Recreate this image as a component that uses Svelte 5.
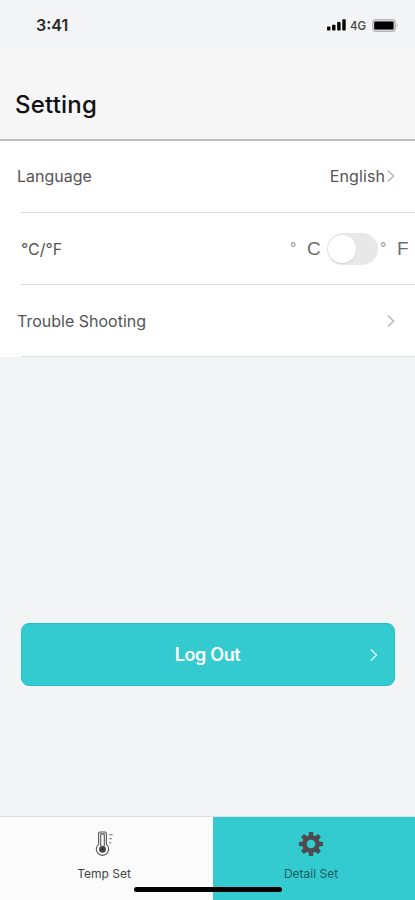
<script lang="ts">
  let fahrenheit = $state(false);
  let activeTab = $state('detail');

  // Teeth of the gear, one every 45 degrees
  const teeth = [0, 45, 90, 135, 180, 225, 270, 315];
</script>

{#snippet chevron()}
  <svg class="chevron" width="8" height="14" viewBox="0 0 8 14">
    <path d="M0.8 1.4 L6.6 7 L0.8 12.6" fill="none" stroke="currentColor" stroke-width="1.4" />
  </svg>
{/snippet}

<div class="screen">
  <div class="status-bar">
    <span class="time">3:41</span>
    <div class="indicators">
      <svg width="19" height="12" viewBox="0 0 19 12">
        <rect x="0" y="7.5" width="3.4" height="4" rx="0.8" />
        <rect x="5.1" y="5.7" width="3.4" height="5.8" rx="0.8" />
        <rect x="10.2" y="3" width="3.4" height="8.5" rx="0.8" />
        <rect x="15.3" y="0.3" width="3.4" height="11.2" rx="0.8" />
      </svg>
      <span class="network">4G</span>
      <svg width="27" height="13" viewBox="0 0 27 13">
        <rect x="0.7" y="0.7" width="22.6" height="11.6" rx="3" fill="#d6d6d8" stroke="#b8b8bb" stroke-width="1.3" />
        <rect x="2.2" y="2.4" width="19.4" height="8.2" rx="1.2" />
        <path d="M24.7 4.5 Q26.6 6.5 24.7 8.5 Z" fill="#a5a5a8" />
      </svg>
    </div>
  </div>

  <header>
    <h1>Setting</h1>
  </header>

  <div class="list">
    <div class="row language">
      <span>Language</span>
      <div class="value">
        <span>English</span>
        {@render chevron()}
      </div>
    </div>
    <div class="row units">
      <span>°C/°F</span>
      <div class="unit-switch">
        <span class="degree">°</span>
        <span class="letter">C</span>
        <button
          class="toggle"
          class:on={fahrenheit}
          aria-label="Temperature unit"
          onclick={() => (fahrenheit = !fahrenheit)}
        ><i></i></button>
        <span class="degree">°</span>
        <span class="letter last">F</span>
      </div>
    </div>
    <div class="row">
      <span>Trouble Shooting</span>
      {@render chevron()}
    </div>
  </div>

  <main>
    <button class="logout">
      <span>Log Out</span>
      {@render chevron()}
    </button>
  </main>

  <nav>
    <button class="tab" class:active={activeTab === 'temp'} onclick={() => (activeTab = 'temp')}>
      <svg width="26" height="26" viewBox="0 0 26 26" fill="none" stroke="#555">
        <path d="M7.6 13.4 V2.6 Q7.6 1 9.2 1 H13.8 Q15.4 1 15.4 2.6 V13.4 A6.2 6.2 0 1 1 7.6 13.4 Z" stroke-width="1.1" />
        <path d="M9.7 15 V4 M13.3 15 V4" stroke-width="1.1" />
        <path d="M9 3 H14" stroke-width="1.4" />
        <circle cx="11.5" cy="18.2" r="3.5" fill="#4a4a4a" stroke="none" />
        <circle cx="11.5" cy="18.2" r="0.9" fill="#222" stroke="none" />
        <path d="M18.2 3.6 H21.6 M18.2 7.6 H20.8 M18.2 11.6 H20.2" stroke="#888" stroke-width="1.3" />
      </svg>
      <span>Temp Set</span>
    </button>
    <button class="tab" class:active={activeTab === 'detail'} onclick={() => (activeTab = 'detail')}>
      <svg width="26" height="26" viewBox="-13 -13 26 26" fill="#4c4c4e">
        {#each teeth as angle}
          <path d="M-2.6 -7.5 L-2 -12 H2 L2.6 -7.5 Z" transform="rotate({angle})" />
        {/each}
        <circle r="6.5" fill="none" stroke="#4c4c4e" stroke-width="4.4" />
      </svg>
      <span>Detail Set</span>
    </button>
    <div class="home-indicator"></div>
  </nav>
</div>

<style>
  :global(body) {
    margin: 0;
  }
  .screen {
    width: 415px;
    height: 900px;
    display: flex;
    flex-direction: column;
    overflow: hidden;
    background: #f2f4f6;
    font-family: Inter, "Liberation Sans", sans-serif;
    color: #555;
  }
  button {
    font: inherit;
    border: none;
    padding: 0;
    cursor: pointer;
  }
  .status-bar {
    box-sizing: border-box;
    height: 50px;
    padding: 0 16px 0 36px;
    display: flex;
    align-items: center;
    justify-content: space-between;
    color: #2a2a2a;
  }
  .time {
    font-size: 16px;
    font-weight: 600;
    letter-spacing: 0;
  }
  .indicators {
    display: flex;
    align-items: center;
  }
  .network {
    width: 17px;
    margin: 1px 5px 0 4px;
    font-size: 11.5px;
    font-weight: 500;
    color: #444;
  }
  header {
    box-sizing: border-box;
    height: 91px;
    padding: 40px 15px 0;
    background: #f6f6f6;
    border-bottom: 2px solid #bebebe;
  }
  h1 {
    margin: 0;
    font-size: 24px;
    line-height: 30px;
    font-weight: 500;
    letter-spacing: 0.2px;
    color: #111;
  }
  .list {
    background: #fff;
  }
  .row {
    box-sizing: border-box;
    height: 72px;
    padding: 0 20px 0 17px;
    display: flex;
    align-items: center;
    justify-content: space-between;
    font-size: 16px;
    background: linear-gradient(#dedfe0, #dedfe0) 21px 100% / 100% 1px no-repeat;
  }
  .row.language {
    padding-bottom: 2px;
  }
  .value {
    display: flex;
    align-items: center;
    gap: 2px;
    letter-spacing: 0.1px;
  }
  .chevron {
    color: #b5b5b5;
  }
  .row.units {
    padding: 0 6px 1px 21px;
  }
  .unit-switch {
    display: flex;
    align-items: center;
    font-family: "Liberation Sans", sans-serif;
    font-size: 18px;
    color: #6c6c6c;
  }
  .degree {
    width: 17px;
    font-size: 16px;
    color: #909090;
  }
  .letter {
    width: 20px;
    font-size: 19px;
  }
  .letter.last {
    width: 12px;
  }
  .toggle {
    width: 51px;
    height: 32px;
    margin-right: 2px;
    border-radius: 16px;
    background: #e8e8e8;
  }
  .toggle i {
    display: block;
    width: 28px;
    height: 28px;
    margin-left: 1px;
    border-radius: 50%;
    background: #fff;
    box-shadow: 0 1px 2px rgba(0, 0, 0, 0.1);
  }
  .toggle.on i {
    margin-left: 22px;
  }
  main {
    flex: 1;
    padding: 266px 20px 0 21px;
  }
  .logout {
    box-sizing: border-box;
    width: 100%;
    height: 63px;
    padding: 0 16px 0 23px;
    display: flex;
    align-items: center;
    border: 1px solid #20c3c8;
    border-radius: 8px;
    background: #33cbd0;
    color: #fff;
    font-size: 18px;
    font-weight: 600;
    letter-spacing: -0.35px;
  }
  .logout span {
    flex: 1;
  }
  .logout .chevron {
    color: #d9fbfc;
  }
  nav {
    position: relative;
    display: flex;
    box-sizing: border-box;
    height: 84px;
    border-top: 1px solid #dedfdf;
    background: #fbfbfb;
  }
  .tab {
    flex: 1;
    display: flex;
    flex-direction: column;
    align-items: center;
    padding: 14px 0 0;
    background: none;
    color: #444;
    font-size: 12px;
  }
  .tab:first-child {
    flex: 0 0 213px;
    padding-right: 5px;
  }
  .tab:nth-child(2) {
    padding-right: 6px;
  }
  .tab span {
    margin-top: 9px;
    line-height: 16px;
  }
  .tab.active {
    background: #33cbd0;
    color: #1d5c60;
  }
  .home-indicator {
    position: absolute;
    left: 134px;
    bottom: 8px;
    width: 148px;
    height: 5px;
    border-radius: 3px;
    background: #000;
  }
</style>
